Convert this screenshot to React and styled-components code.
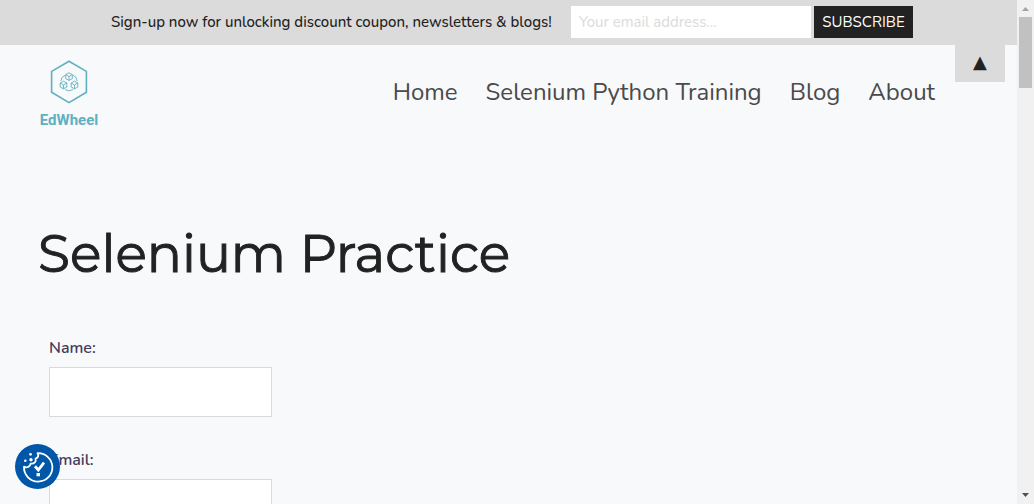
import React from "react";
import styled, { createGlobalStyle } from "styled-components";

const GlobalStyle = createGlobalStyle`
  *, *::before, *::after { box-sizing: border-box; }
  body {
    margin: 0;
    background: #f8f9fb;
    color: #222;
    font-family: Nunito, Lato, "Noto Sans", sans-serif;
    font-size: 16px;
  }
`;

const Shell = styled.div`
  display: flex;
  height: 100vh;
  overflow: hidden;
`;

const Page = styled.div`
  position: relative;
  flex: 1;
  min-width: 0;
  overflow: hidden;
`;

const SignupBar = styled.form`
  display: flex;
  align-items: center;
  justify-content: center;
  height: 45px;
  padding: 0 0 1px 7px;
  background: #dbdbdb;
  font-size: 15px;
`;

const SignupText = styled.label`
  margin-right: 23px;
  width: 437px;
  font-weight: 500;
  line-height: 24px;
  white-space: nowrap;
`;

const EmailInput = styled.input`
  width: 240px;
  height: 32px;
  margin-right: 3px;
  padding: 0 8px;
  border: 0;
  background: #fff;
  font: inherit;
  &::placeholder { color: #dbdbdb; opacity: 1; }
`;

const SubscribeButton = styled.button`
  width: 99px;
  height: 32px;
  padding: 0;
  border: 0;
  background: #222;
  color: #fff;
  font: inherit;
`;

const BackToTop = styled.a`
  position: absolute;
  top: 45px;
  right: 12px;
  display: flex;
  align-items: center;
  justify-content: center;
  width: 50px;
  height: 37px;
  background: #dbdbdb;
  color: #222;
  font: 18px/34px "DejaVu Sans", sans-serif;
  padding-bottom: 3px;
  text-decoration: none;
`;

const Header = styled.header`
  display: flex;
  align-items: center;
  justify-content: space-between;
  height: 95px;
  padding: 0 82px 0 38px;
`;

const Brand = styled.a`
  display: flex;
  flex-direction: column;
  align-items: center;
  width: 62px;
  padding-top: 4px;
  color: #5fb0c1;
  font: 700 15px/20px Roboto, sans-serif;
  text-decoration: none;
  svg { margin-bottom: 6px; }
`;

const Nav = styled.nav`
  display: flex;
  gap: 28px;
  padding-bottom: 2px;
`;

const NavLink = styled.a`
  color: #4a4a4a;
  font-size: 24px;
  font-weight: 400;
  line-height: 34px;
  text-decoration: none;
`;

const Main = styled.main`
  padding: 80px 38px 0;
`;

const Title = styled.h1`
  margin: 0;
  font: 400 52px/68px Montserrat, Inter, sans-serif;
  -webkit-text-stroke: 1px currentColor;
`;

const Fields = styled.form`
  display: flex;
  flex-direction: column;
  align-items: flex-start;
  gap: 31px;
  padding: 48px 11px 0;
`;

const Field = styled.div`
  display: flex;
  flex-direction: column;
  gap: 7px;
`;

const FieldLabel = styled.label`
  color: #453c5c;
  font-weight: 600;
  line-height: 24px;
`;

const TextInput = styled.input`
  width: 223px;
  height: 50px;
  padding: 0 12px;
  border: 1px solid #d8dade;
  background: #fff;
  font: inherit;
`;

const ConsentButton = styled.button`
  position: fixed;
  left: 15px;
  bottom: 15px;
  width: 45px;
  height: 45px;
  padding: 0;
  border: 0;
  border-radius: 50%;
  background: #0056a7;
  svg { display: block; }
`;

const ScrollTrack = styled.div`
  display: flex;
  flex-direction: column;
  align-items: center;
  width: 17px;
  background: #f1f1f1;
`;

const ScrollArrow = styled.svg`
  display: block;
  flex: none;
  width: 17px;
  height: 17px;
`;

const ScrollThumb = styled.div`
  width: 13px;
  height: 71px;
  margin-bottom: auto;
  background: #c1c1c1;
`;

function Cube({ x, y }) {
  return (
    <g transform={`translate(${x} ${y})`}>
      <path d="M0-3.8 3.3-2V2L0 3.8-3.3 2V-2Z M-3.3-2 0 0 3.3-2M0 0V3.8" />
    </g>
  );
}

function LogoMark() {
  return (
    <svg width="38" height="44" viewBox="0 0 38 44" fill="none" stroke="#5fb0c1" aria-hidden="true">
      <path d="M19 1.3 36.4 11.4V32.2L19 42.6 1.6 32.2V11.4Z" strokeWidth="1.6" />
      <g strokeWidth="0.9">
        <Cube x={19} y={16.6} />
        <Cube x={13.5} y={25} />
        <Cube x={24.5} y={25} />
        <path d="M15 15.2Q11 17 10.8 21M23 15.2Q27 17 27.2 21M15 29.6Q19 32 23 29.6" />
      </g>
    </svg>
  );
}

function CookieIcon() {
  return (
    <svg width="45" height="45" viewBox="0 0 45 45" fill="none" stroke="#fff" aria-hidden="true">
      <path
        d="M22.5 9.2A14.2 14.2 0 1 1 9 22.6C12 24.3 15.2 22.8 15.6 19.6 19.4 20 21.5 17.6 20.5 14.6 23.3 13.7 24 11.5 22.5 9.2Z"
        strokeWidth="1.8"
        strokeLinejoin="round"
      />
      <path d="M20 22.3 23.3 26 29 18.7" strokeWidth="2.8" />
      <g fill="#fff" stroke="none">
        <path d="M21.5 29H25V32.3H21.5Z" />
        <circle cx="15.5" cy="10.3" r="1.4" />
        <circle cx="10.3" cy="16.8" r="1.3" />
        <circle cx="16" cy="15.7" r="1.7" />
      </g>
    </svg>
  );
}

const links = ["Home", "Selenium Python Training", "Blog", "About"];
const fields = [
  { id: "name", label: "Name:", type: "text" },
  { id: "email", label: "Email:", type: "email" },
];

export default function App() {
  return (
    <>
      <GlobalStyle />
      <Shell>
        <Page id="top">
          <SignupBar>
            <SignupText htmlFor="signup-email">
              Sign-up now for unlocking discount coupon, newsletters &amp; blogs!
            </SignupText>
            <EmailInput id="signup-email" type="email" placeholder="Your email address..." />
            <SubscribeButton type="button">SUBSCRIBE</SubscribeButton>
          </SignupBar>
          <Header>
            <Brand href="#">
              <LogoMark />
              EdWheel
            </Brand>
            <Nav>
              {links.map((link) => (
                <NavLink key={link} href="#">{link}</NavLink>
              ))}
            </Nav>
          </Header>
          <BackToTop href="#top" aria-label="Back to top">▲</BackToTop>
          <Main>
            <Title>Selenium Practice</Title>
            <Fields>
              {fields.map((field) => (
                <Field key={field.id}>
                  <FieldLabel htmlFor={field.id}>{field.label}</FieldLabel>
                  <TextInput id={field.id} type={field.type} />
                </Field>
              ))}
            </Fields>
          </Main>
        </Page>
        <ScrollTrack aria-hidden="true">
          <ScrollArrow viewBox="0 0 17 17" fill="#a3a3a3">
            <path d="M8.5 7 12 11H5Z" />
          </ScrollArrow>
          <ScrollThumb />
          <ScrollArrow viewBox="0 0 17 17" fill="#505050">
            <path d="M5 6H12L8.5 10Z" />
          </ScrollArrow>
        </ScrollTrack>
      </Shell>
      <ConsentButton type="button" aria-label="Cookie preferences">
        <CookieIcon />
      </ConsentButton>
    </>
  );
}
